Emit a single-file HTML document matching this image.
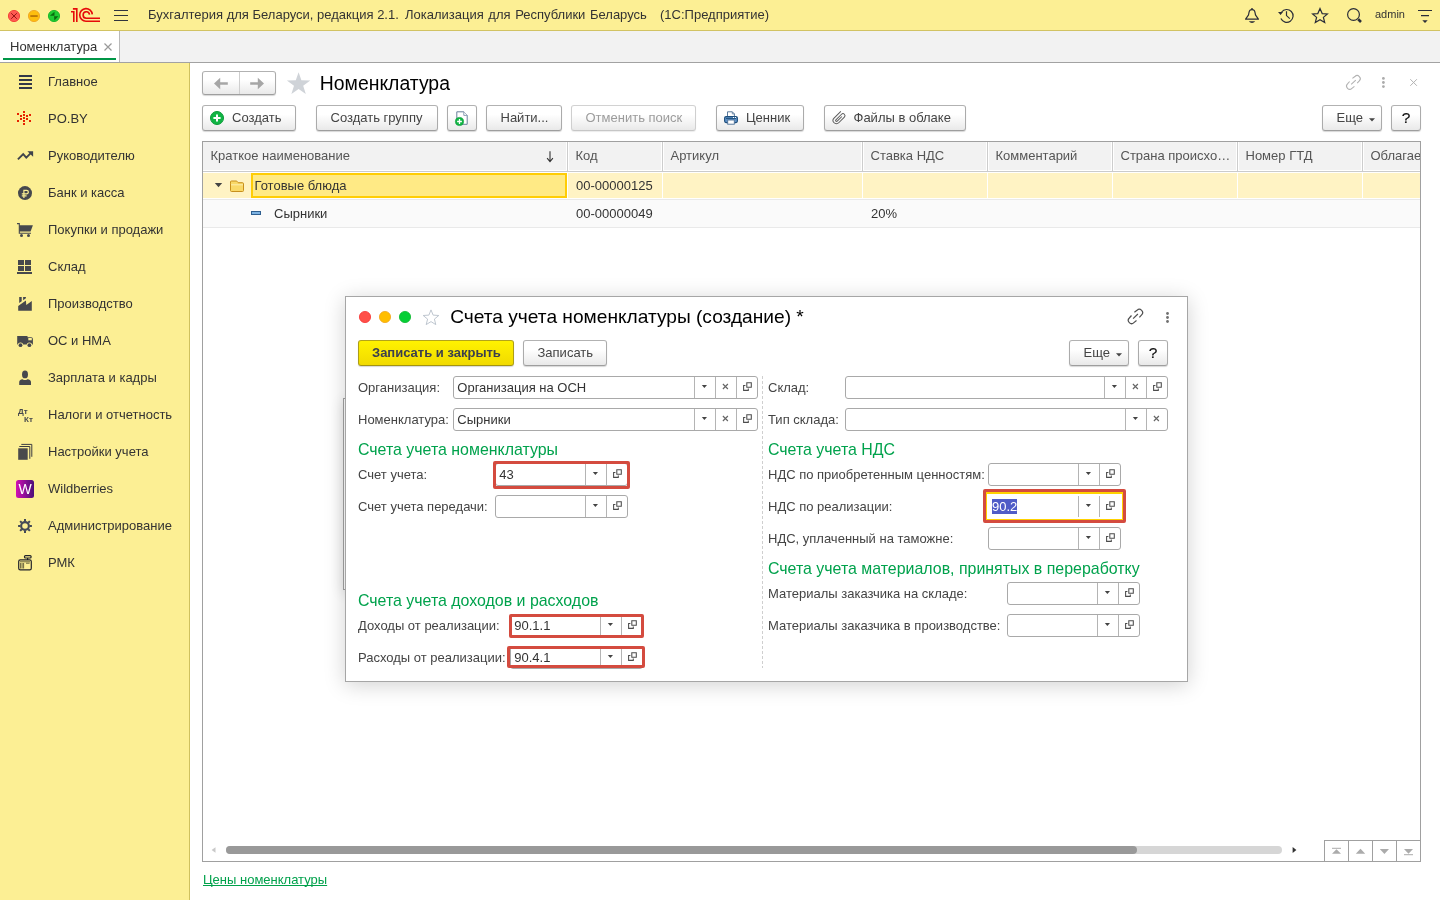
<!DOCTYPE html>
<html lang="ru">
<head>
<meta charset="utf-8">
<title>Номенклатура</title>
<style>
*{box-sizing:border-box;margin:0;padding:0}
html,body{width:1440px;height:900px;overflow:hidden;background:#fff}
body{font-family:"Liberation Sans",sans-serif;font-size:13px;color:#333;position:relative}
#root{position:absolute;left:0;top:0;width:1440px;height:900px;will-change:transform}
.abs{position:absolute}
svg{display:block;position:absolute;overflow:visible}
/* top bar */
#top{position:absolute;left:0;top:0;width:1440px;height:31px;background:#fcef94;border-bottom:1px solid #d2c363}
#top .t{position:absolute;top:7px;line-height:15px;white-space:pre;color:#333;font-size:13px}
.dot{position:absolute;width:12px;height:12px;border-radius:50%;top:10px}
/* tabs */
#tabs{position:absolute;left:0;top:31px;width:1440px;height:32px;background:#f2f2f2;border-bottom:1px solid #a2a2a2}
#tab1{position:absolute;left:0;top:0;width:120px;height:31px;background:#fff;border-right:1px solid #b9b9b9}
#tab1 .lbl{position:absolute;left:10px;top:8px;line-height:15px;color:#333}
#tab1 .ul{position:absolute;left:3px;top:27px;width:113px;height:2px;background:#009646}
/* sidebar */
#side{position:absolute;left:0;top:63px;width:190px;height:837px;background:#fcef94;border-right:1px solid #cfc15f}
.si{position:absolute;left:48px;line-height:15px;color:#333;white-space:nowrap}
/* main */
.btn{position:absolute;height:26px;border:1px solid #adadad;border-color:#b2b2b2 #ababab #9e9e9e;border-radius:3px;background:linear-gradient(#ffffff 0%,#ffffff 35%,#e9e9e9 100%);box-shadow:0 1px 1px rgba(0,0,0,.16);color:#444;line-height:23px;white-space:nowrap}
.btn .l{position:absolute;top:0;line-height:23px}

/* main area (page coords) */
#main{position:absolute;left:0;top:0;width:1440px;height:900px;pointer-events:none}
.btn.dis{border-color:#d2d2d2 #cfcfcf #c6c6c6;color:#9c9c9c;box-shadow:0 1px 1px rgba(0,0,0,.08)}
.h1{position:absolute;font-size:19.4px;line-height:24px;color:#000;white-space:nowrap}
/* table */
#tbl{position:absolute;left:202px;top:141px;width:1219px;height:721px;border:1px solid #a0a0a0;background:#fff;overflow:hidden}
#thead{position:absolute;left:0;top:0;width:1217px;height:28px;background:#f2f2f2}
.th{position:absolute;top:7px;line-height:15px;color:#555;white-space:nowrap}
.vsep{position:absolute;top:0;width:3px;height:29px;background:#fff}
.vsep i{position:absolute;left:1px;top:0;width:1px;height:100%;background:#cdcdcd}
.td{position:absolute;line-height:15px;color:#333;white-space:nowrap}
.wsep{position:absolute;width:1px;background:#fff}
.lnk{position:absolute;color:#00a14b;text-decoration:underline;text-decoration-skip-ink:none;line-height:15px;white-space:nowrap}

/* dialog */
#back{position:absolute;left:343px;top:398px;width:40px;height:192px;background:#fff;border:1px solid #a2a2a2;box-shadow:0 3px 14px rgba(0,0,0,.12)}
#dlg{position:absolute;left:345px;top:296px;width:843px;height:386px;background:#fff;border:1px solid #a6a6a6;box-shadow:0 3px 20px rgba(0,0,0,.18)}
#dlgc{position:absolute;left:-346px;top:-297px;width:1440px;height:900px}
.lb{position:absolute;line-height:15px;color:#444;white-space:nowrap}
.sec{position:absolute;font-size:15.93px;line-height:18px;color:#00a24c;white-space:nowrap}
.inp{position:absolute;height:23px;border:1px solid #a9a9a9;border-radius:3px;background:#fff}
.inp .v{position:absolute;left:3.3px;top:0;line-height:21px;color:#333;white-space:nowrap}
.inp i{position:absolute;top:0;width:1px;height:21px;background:#b4b4b4}
.inp svg{top:0}
.red{position:absolute;border:3px solid #d44b3f;border-radius:2px}
.ybtn{background:linear-gradient(#fff200,#f1da00);border-color:#b3a41a #ad9e16 #a39410;color:#3b3f4e;font-weight:bold}
</style>
</head>
<body>
<div id="root">
<!-- TOP BAR -->
<div id="top">

  <svg width="1440" height="31" style="left:0;top:0" viewBox="0 0 1440 31">
    <!-- window dots -->
    <circle cx="14" cy="16" r="5.6" fill="#ff5a52" stroke="#f23a32" stroke-width="0.9"/>
    <path d="M11.2 13.2L16.8 18.8M16.8 13.2L11.2 18.8" stroke="#8c0d0d" stroke-width="0.9" fill="none"/>
    <circle cx="34" cy="16" r="5.6" fill="#fdbe0e" stroke="#f0a422" stroke-width="0.9"/>
    <rect x="30.3" y="15.2" width="7.4" height="1.7" fill="#b67306"/>
    <circle cx="54" cy="16" r="5.6" fill="#20cb32" stroke="#14b426" stroke-width="0.9"/>
    <path d="M49.8 15.8L54.5 11.7L54.5 15.8ZM54 16.3L58.3 16.3L54.4 20.4Z" fill="#0a6a0f"/>
    <!-- 1C logo -->
    <g fill="none" stroke="#e60a0a" stroke-width="1.6">
      <path d="M71 11.8L73.8 11.8L73.8 22"/>
      <path d="M72.9 8.9L76.8 8.9L76.8 22"/>
      <path d="M92.3 14.4A6.3 6.3 0 1 0 86 21.2L100 21.2"/>
      <path d="M89.5 14.6A3.2 3.2 0 1 0 86.3 18.2L100 18.2"/>
    </g>
    <!-- hamburger -->
    <path d="M114 10.5H128M114 15.5H128M114 20.5H128" stroke="#30343e" stroke-width="1.2"/>
    <!-- bell -->
    <g fill="none" stroke="#2b2e38" stroke-width="1.2" stroke-linejoin="round">
      <path d="M1245.6 19.2H1258.4L1255.6 15.2C1255 13.5 1255.2 11.6 1254.2 10.4C1253.2 9.3 1250.8 9.3 1249.8 10.4C1248.8 11.6 1249 13.5 1248.4 15.2Z"/>
    </g>
    <circle cx="1252" cy="8.8" r="0.9" fill="#2b2e38"/>
    <path d="M1248.9 21.2H1255.1C1254.3 22.4 1253.2 22.9 1252 22.9C1250.8 22.9 1249.7 22.4 1248.9 21.2Z" fill="#2b2e38"/>
    <!-- history -->
    <g fill="none" stroke="#2b2e38" stroke-width="1.2">
      <path d="M1281.6 12A6.4 6.4 0 1 1 1280.9 18.6"/>
      <path d="M1286.5 11.2V15.6L1289.8 18.6"/>
    </g>
    <path d="M1278 12.1H1283L1280.6 15Z" fill="#2b2e38"/>
    <!-- star -->
    <path d="M1320 8.6L1322.2 13.6L1327.4 14L1323.4 17.4L1324.7 22.4L1320 19.7L1315.3 22.4L1316.6 17.4L1312.6 14L1317.8 13.6Z" fill="none" stroke="#2b2e38" stroke-width="1.2" stroke-linejoin="miter"/>
    <!-- search -->
    <circle cx="1353.5" cy="14.5" r="5.9" fill="none" stroke="#2b2e38" stroke-width="1.2"/>
    <path d="M1358.2 19.3L1361 22" stroke="#2b2e38" stroke-width="2.6"/>
    <!-- filter -->
    <path d="M1418 10.5H1432M1421 15.6H1429" stroke="#2b2e38" stroke-width="1.2"/>
    <path d="M1422.3 20.2H1427.7L1425 22.9Z" fill="#2b2e38"/>
  </svg>
  <span class="t" style="left:148px">Бухгалтерия для Беларуси, редакция 2.1.</span>
  <span class="t" style="left:405px;word-spacing:1px">Локализация для Республики Беларусь</span>
  <span class="t" style="left:660px">(1С:Предприятие)</span>
  <span class="t" style="left:1375px;font-size:11px;top:7px">admin</span>
</div>
<!-- TABS -->
<div id="tabs">
  <div id="tab1"><span class="lbl">Номенклатура</span><svg width="8" height="8" style="left:104px;top:12px" viewBox="0 0 8 8"><path d="M0.5 0.5L7.5 7.5M7.5 0.5L0.5 7.5" stroke="#9a9a9a" stroke-width="1.2"/></svg><div class="ul"></div></div>
</div>
<!-- SIDEBAR -->
<div id="side">

  <svg width="60" height="837" style="left:0;top:0" viewBox="0 63 60 837">
    <g fill="#333848">
      <rect x="19" y="75" width="13" height="2"/><rect x="19" y="79" width="13" height="2"/><rect x="19" y="83" width="13" height="2"/><rect x="19" y="87" width="13" height="2"/>
    </g>
    <g fill="#e62200"><rect x="23" y="111" width="2" height="2"/><rect x="23" y="114" width="2" height="2"/><rect x="23" y="117" width="2" height="2"/><rect x="23" y="120" width="2" height="2"/><rect x="23" y="123" width="2" height="2"/><rect x="17" y="113" width="2" height="2"/><rect x="20" y="115" width="2" height="2"/><rect x="26" y="115" width="2" height="2"/><rect x="29" y="114" width="2" height="2"/><rect x="20" y="118" width="2" height="2"/><rect x="26" y="118" width="2" height="2"/><rect x="17" y="120" width="2" height="2"/><rect x="29" y="120" width="2" height="2"/></g>
    <!-- trend -->
    <path d="M17.9 159.4L23.2 154.1L26.3 157.6L31 152.9" fill="none" stroke="#3f434b" stroke-width="1.9"/>
    <path d="M27.4 151.2H33.1V156.8Z" fill="#3f434b"/>
    <!-- ruble -->
    <circle cx="25" cy="193.1" r="7" fill="#46484d"/>
    <path d="M23.9 198V190.3H26.6A1.75 1.75 0 0 1 26.6 193.8H21.8M21.8 195.8H26.6" fill="none" stroke="#fcef94" stroke-width="1.2"/>
    <!-- cart -->
    <g fill="#46484d">
      <path d="M19.2 225.2H32.9L30.6 231.6H19.2Z"/>
      <circle cx="21.5" cy="235.6" r="1.5"/><circle cx="28.5" cy="235.6" r="1.5"/>
    </g>
    <path d="M17 223.6H19.3V233.3H31" fill="none" stroke="#46484d" stroke-width="1.1"/>
    <!-- sklad -->
    <g fill="#46484d">
      <rect x="18" y="260" width="6" height="5"/><rect x="25" y="260" width="6" height="5"/>
      <rect x="18" y="266" width="6" height="5"/><rect x="25" y="266" width="6" height="5"/>
      <rect x="17" y="272" width="15" height="2"/>
    </g>
    <!-- factory -->
    <g fill="#46484d">
      <path d="M18.2 310.7V306L25.9 300.6L26.3 304.9L31.8 301V310.7Z"/>
      <path d="M19.2 297.1H21.7V301.3L19.2 303.1Z"/>
      <path d="M23.1 297.1H25.9V298.3L23.1 300.3Z"/>
    </g>
    <!-- truck -->
    <g fill="#46484d">
      <path d="M17.2 336.1H27.5V337.2H31.2Q32.9 337.2 32.9 339V344.4H17.2Z"/>
    </g>
    <rect x="28.3" y="338" width="3.5" height="2.3" fill="#fcef94"/>
    <circle cx="20.5" cy="345.2" r="2.7" fill="#fcef94"/><circle cx="29.4" cy="345.2" r="2.7" fill="#fcef94"/>
    <circle cx="20.5" cy="345.2" r="1.9" fill="#46484d"/><circle cx="29.4" cy="345.2" r="1.9" fill="#46484d"/>
    <!-- person -->
    <g fill="#46484d">
      <ellipse cx="25" cy="374.4" rx="3" ry="3.9"/>
      <path d="M19.2 384.9V382.2Q19.2 379.6 22.6 379.2Q25 381 27.4 379.2Q31 379.6 31 382.2V384.9Z"/>
    </g>
    <!-- pages -->
    <rect x="18.2" y="448.3" width="9.5" height="11.5" fill="#4a4a4c"/>
    <path d="M19.3 446.5H29.8V458.8M21.3 444.4H31.8V456.8" fill="none" stroke="#3c3d42" stroke-width="1"/>
    <!-- gear -->
    <g stroke="#444a56" fill="none"><circle cx="25" cy="526" r="3.85" stroke-width="2.1"/><path d="M29.60 526.00L31.90 526.00M28.25 529.25L29.88 530.88M25.00 530.60L25.00 532.90M21.75 529.25L20.12 530.88M20.40 526.00L18.10 526.00M21.75 522.75L20.12 521.12M25.00 521.40L25.00 519.10M28.25 522.75L29.88 521.12" stroke-width="2"/></g>
    <!-- rmk -->
    <g fill="none" stroke="#22242a" stroke-width="1.2">
      <rect x="18.7" y="559.9" width="12.6" height="10" rx="1.6"/>
      <rect x="24.5" y="555.6" width="6.6" height="2.4" rx="1"/>
      <path d="M27.6 558V560"/>
    </g>
    <g stroke="#5a5636" stroke-width="0.9" fill="none">
      <path d="M20 561.8H30M20.6 563V568.5M22.1 563V568.5M23.6 563V568.5M26 563.2H29.6"/>
    </g>
  </svg>
  <span class="abs" style="left:18px;top:343.5px;font-size:8px;font-weight:bold;line-height:10px;color:#46484d">Дт</span>
  <span class="abs" style="left:24px;top:351.5px;font-size:8px;font-weight:bold;line-height:10px;color:#46484d">Кт</span>
  <div class="abs" style="left:16px;top:417px;width:18px;height:18px;border-radius:2.5px;background:linear-gradient(90deg,#d20fb4,#4a1078);color:#fff;font-size:14px;line-height:18px;text-align:center">W</div>
  <span class="si" style="top:11px">Главное</span>
  <span class="si" style="top:48px">PO.BY</span>
  <span class="si" style="top:85px">Руководителю</span>
  <span class="si" style="top:122px">Банк и касса</span>
  <span class="si" style="top:159px">Покупки и продажи</span>
  <span class="si" style="top:196px">Склад</span>
  <span class="si" style="top:233px">Производство</span>
  <span class="si" style="top:270px">ОС и НМА</span>
  <span class="si" style="top:307px">Зарплата и кадры</span>
  <span class="si" style="top:344px">Налоги и отчетность</span>
  <span class="si" style="top:381px">Настройки учета</span>
  <span class="si" style="top:418px">Wildberries</span>
  <span class="si" style="top:455px">Администрирование</span>
  <span class="si" style="top:492px">РМК</span>
</div>
<!-- MAIN -->
<div id="main">
  <!-- nav buttons -->
  <div class="btn" style="left:202px;top:71px;width:74px;height:24px">
    <div class="abs" style="left:36px;top:0;width:1px;height:22px;background:#cecece"></div>
    <svg width="72" height="22" style="left:0;top:0" viewBox="203 72 72 22">
      <path d="M214 83.5L220.2 77.8V82.2H227.8V84.8H220.2V89.2Z" fill="#a6a6a6"/>
      <path d="M264 83.5L257.8 77.8V82.2H250.2V84.8H257.8V89.2Z" fill="#a6a6a6"/>
    </svg>
  </div>
  <svg width="24" height="22" style="left:287px;top:72px" viewBox="287 72 24 22"><path d="M298.6 72.2L301.4 80.3L310.3 80.5L303.2 85.7L305.8 94L298.6 89L291.4 94L294 85.7L286.9 80.5L295.8 80.3Z" fill="#cfd3d8"/></svg>
  <span class="h1" style="left:319.8px;top:71px">Номенклатура</span>
  <!-- header right icons -->
  <svg width="80" height="20" style="left:1344px;top:73px" viewBox="1344 73 80 20">
    <g fill="none" stroke="#b2b2b2" stroke-width="1.1" transform="translate(1345.3,74.3) scale(0.96)"><path d="M7.4 4.3L10 2.3A3.25 3.25 0 0 1 14.6 6.9L12.4 9.3M4.5 7.5L2.3 10A3.25 3.25 0 0 0 6.9 14.6L9.5 12.5M6.1 10.6L10.9 6"/></g><path d="M1410.3 79.2L1416.9 85.8M1416.9 79.2L1410.3 85.8" stroke="#b2b2b2" stroke-width="1" fill="none"/>
    <g fill="#ababab"><circle cx="1383.4" cy="78.4" r="1.4"/><circle cx="1383.4" cy="82.5" r="1.4"/><circle cx="1383.4" cy="86.6" r="1.4"/></g>
  </svg>
  <!-- toolbar -->
  <div class="btn" style="left:202px;top:105px;width:94px">
    <svg width="14" height="14" style="left:7px;top:5px" viewBox="0 0 14 14"><circle cx="7" cy="7" r="6.5" fill="#11b545" stroke="#0a9a36" stroke-width="1"/><path d="M7 3.4V10.6M3.4 7H10.6" stroke="#fff" stroke-width="2"/></svg>
    <span class="l" style="left:29px">Создать</span>
  </div>
  <div class="btn" style="left:316px;top:105px;width:122px"><span class="l" style="left:13.5px">Создать группу</span></div>
  <div class="btn" style="left:447px;top:105px;width:30px">
    <svg width="30" height="25" style="left:-1px;top:-1px" viewBox="447 105 30 25">
      <path d="M456.8 111.8H463.8L467.2 115.4V124.3H456.8Z" fill="#fff" stroke="#6a809c" stroke-width="1"/>
      <path d="M463.8 111.8V115.4H467.2" fill="#fff" stroke="#7f93ad" stroke-width="0.9"/>
      <circle cx="459.5" cy="121.5" r="4.1" fill="#10b444" stroke="#0a9c38" stroke-width="0.6"/>
      <path d="M459.5 119.1V123.9M457.1 121.5H461.9" stroke="#fff" stroke-width="1.3"/>
    </svg>
  </div>
  <div class="btn" style="left:486px;top:105px;width:76px"><span class="l" style="left:13.5px">Найти...</span></div>
  <div class="btn dis" style="left:571px;top:105px;width:125px"><span class="l" style="left:13.5px">Отменить поиск</span></div>
  <div class="btn" style="left:716px;top:105px;width:88px">
    <svg width="16" height="16" style="left:7px;top:5px" viewBox="724 111 16 16"><path d="M727.5 116.4V111.8H732.3L734.4 113.9V116.4" fill="#fff" stroke="#5a7a9c" stroke-width="1"/><path d="M732.3 111.8V113.9H734.4" fill="none" stroke="#5a7a9c" stroke-width="0.8"/><rect x="724.6" y="116.6" width="12.8" height="6" rx="1.5" fill="#5d90c6" stroke="#1f4f7c" stroke-width="1.1"/><path d="M726 118.5H736" stroke="#1f4f7c" stroke-width="0.9"/><rect x="727.7" y="120" width="6.6" height="4.2" fill="#fff" stroke="#4c6f96" stroke-width="0.9"/><rect x="733" y="117" width="1" height="1" fill="#fff"/><rect x="735" y="117" width="1" height="1" fill="#fff"/></svg>
    <span class="l" style="left:29px">Ценник</span>
  </div>
  <div class="btn" style="left:824px;top:105px;width:142px">
    <svg width="16" height="16" style="left:7px;top:5px" viewBox="832 111 16 16"><path transform="translate(839,117.5) rotate(-45)" d="M5.7 -3.1L-3.9 -3.1A3.3 3.3 0 0 0 -3.9 3.5L4.1 3.5A2 2 0 0 0 4.1 -0.5L-3.9 -0.5A0.92 0.92 0 0 0 -3.9 1.34L2.76 1.34" fill="none" stroke="#5c5c5c" stroke-width="1"/></svg>
    <span class="l" style="left:28.5px">Файлы в облаке</span>
  </div>
  <div class="btn" style="left:1322px;top:105px;width:60px"><span class="l" style="left:13.5px">Еще</span>
    <svg width="6" height="4" style="left:46px;top:11.5px" viewBox="0 0 6 4"><path d="M0 0.2H6L3 3.4Z" fill="#444"/></svg>
  </div>
  <div class="btn" style="left:1391px;top:105px;width:30px"><span class="l" style="left:0;top:0.3px;width:28px;text-align:center;font-size:15.5px;color:#111;-webkit-text-stroke:0.2px #111">?</span></div>

  <!-- table -->
  <div id="tbl">
    <div id="thead"></div>
    <div class="abs" style="left:0;top:29px;width:1217px;height:1px;background:#cbcbcb"></div>
    <!-- row1 -->
    <div class="abs" style="left:0;top:31px;width:1217px;height:25px;background:#fff3c4"></div>
    <div class="abs" style="left:48px;top:31px;width:316px;height:25px;background:#ffea85;border:2px solid #ffcd05"></div>
    <div class="abs" style="left:0;top:57px;width:1217px;height:1px;background:#e9e9e9"></div>
    <!-- row2 -->
    <div class="abs" style="left:0;top:58px;width:1217px;height:27px;background:#fafafa"></div>
    <div class="abs" style="left:0;top:85px;width:1217px;height:1px;background:#e9e9e9"></div>
    <div class="vsep" style="left:363px"><i></i></div>
    <div class="wsep" style="left:364px;top:31px;height:25px"></div>
    <div class="vsep" style="left:458px"><i></i></div>
    <div class="wsep" style="left:459px;top:31px;height:25px"></div>
    <div class="vsep" style="left:658px"><i></i></div>
    <div class="wsep" style="left:659px;top:31px;height:25px"></div>
    <div class="vsep" style="left:783px"><i></i></div>
    <div class="wsep" style="left:784px;top:31px;height:25px"></div>
    <div class="vsep" style="left:908px"><i></i></div>
    <div class="wsep" style="left:909px;top:31px;height:25px"></div>
    <div class="vsep" style="left:1033px"><i></i></div>
    <div class="wsep" style="left:1034px;top:31px;height:25px"></div>
    <div class="vsep" style="left:1158px"><i></i></div>
    <div class="wsep" style="left:1159px;top:31px;height:25px"></div>
    <span class="th" style="left:7.5px;top:6px">Краткое наименование</span>
    <span class="th" style="left:372.5px;top:6px">Код</span>
    <span class="th" style="left:467.5px;top:6px">Артикул</span>
    <span class="th" style="left:667.5px;top:6px">Ставка НДС</span>
    <span class="th" style="left:792.5px;top:6px">Комментарий</span>
    <span class="th" style="left:917.5px;top:6px">Страна происхо…</span>
    <span class="th" style="left:1042.5px;top:6px">Номер ГТД</span>
    <span class="th" style="left:1167.5px;top:6px">Облагаемая</span>
    <svg width="8" height="12" style="left:342.5px;top:8.5px" viewBox="0 0 8 12"><path d="M4 0.3V10.4M1.1 7.2L4 10.6L6.9 7.2" fill="none" stroke="#333" stroke-width="1.1"/></svg>
    <span class="td" style="left:51.5px;top:36px">Готовые блюда</span>
    <span class="td" style="left:373px;top:36px">00-00000125</span>
    <span class="td" style="left:71px;top:64px">Сырники</span>
    <span class="td" style="left:373px;top:64px">00-00000049</span>
    <span class="td" style="left:668px;top:64px">20%</span>
    <svg width="40" height="40" style="left:0;top:31px" viewBox="203 173 40 40"><path d="M214.8 183H222.2L218.5 187.2Z" fill="#444"/><path d="M230.5 183.2V182Q230.5 181 231.5 181H236.2Q237 181 237.5 181.8L238.2 182.7H242.5Q243.5 182.7 243.5 183.7V190.5Q243.5 191.5 242.5 191.5H231.5Q230.5 191.5 230.5 190.5Z" fill="#f9d968" stroke="#c8901c" stroke-width="1"/><path d="M231 184.8H243" stroke="#fdeeb0" stroke-width="1"/></svg>
    <div class="abs" style="left:48px;top:69px;width:10px;height:4px;background:#7db3e3;border:1px solid #2f5f90"></div>
    <div class="abs" style="left:23px;top:704px;width:1056px;height:8px;border-radius:4px;background:#d6d6d6"></div>
    <div class="abs" style="left:23px;top:704px;width:911px;height:8px;border-radius:4px;background:#999"></div>
    <svg width="6" height="8" style="left:7.8px;top:704px" viewBox="0 0 6 8"><path d="M4.5 1.2V6.8L0.6 4Z" fill="#c9c9c9"/></svg>
    <svg width="6" height="8" style="left:1088.5px;top:704px" viewBox="0 0 6 8"><path d="M0.6 1V7L4.4 4Z" fill="#333"/></svg>
    <div class="abs" style="left:1121px;top:698px;width:97px;height:22px;background:#fff;border-left:1px solid #a0a0a0;border-top:1px solid #a0a0a0"></div>
    <div class="abs" style="left:1145px;top:699px;width:1px;height:21px;background:#a0a0a0"></div>
    <div class="abs" style="left:1169px;top:699px;width:1px;height:21px;background:#a0a0a0"></div>
    <div class="abs" style="left:1193px;top:699px;width:1px;height:21px;background:#a0a0a0"></div>
    <svg width="96" height="21" style="left:1122px;top:699px" viewBox="1325 841 96 21"><g fill="#ababab"><rect x="1332" y="847.8" width="9" height="1"/><path d="M1336.5 849.2L1341 853.8H1332Z"/><path d="M1360.5 848.8L1365.2 853.8H1355.8Z"/><path d="M1379.8 849.1H1389L1384.4 854Z"/><path d="M1404 849.1H1413L1408.5 853.7Z"/><rect x="1404" y="854.2" width="9" height="1"/></g></svg>
  </div>
  <span class="lnk" style="left:203px;top:872px">Цены номенклатуры</span>
</div>

<div id="back"></div>
<div id="dlg"><div id="dlgc">

<svg width="100" height="20" style="left:355px;top:307px" viewBox="355 307 100 20"><circle cx="365" cy="317" r="5.6" fill="#ff4f49" stroke="#f63232" stroke-width="0.8"/><circle cx="385" cy="317" r="5.6" fill="#ffbe00" stroke="#f1a51c" stroke-width="0.8"/><circle cx="405" cy="317" r="5.6" fill="#06cf36" stroke="#0bb82f" stroke-width="0.8"/><path d="M431 309.9L433.1 315.1L438.8 315.5L434.4 319.1L435.8 324.6L431 321.6L426.2 324.6L427.6 319.1L423.2 315.5L428.9 315.1Z" fill="none" stroke="#b7c0ca" stroke-width="0.9"/></svg>
<span class="h1" style="left:450.2px;top:305px;font-size:19.15px">Счета учета номенклатуры (создание) *</span>
<svg width="50" height="20" style="left:1125px;top:306px" viewBox="1125 306 50 20"><g fill="none" stroke="#505050" stroke-width="1.2" transform="translate(1127,308)"><path d="M7.4 4.3L10 2.3A3.25 3.25 0 0 1 14.6 6.9L12.4 9.3M4.5 7.5L2.3 10A3.25 3.25 0 0 0 6.9 14.6L9.5 12.5M6.1 10.6L10.9 6"/></g><g fill="#707070"><circle cx="1167.5" cy="313.5" r="1.4"/><circle cx="1167.5" cy="317.5" r="1.4"/><circle cx="1167.5" cy="321.5" r="1.4"/></g></svg>
<div class="btn ybtn" style="left:358px;top:340px;width:156px"><span class="l" style="left:13px">Записать и закрыть</span></div>
<div class="btn" style="left:523px;top:340px;width:84px"><span class="l" style="left:13.5px">Записать</span></div>
<div class="btn" style="left:1069px;top:340px;width:60px"><span class="l" style="left:13.5px">Еще</span><svg width="6" height="4" style="left:46px;top:11.5px" viewBox="0 0 6 4"><path d="M0 0.2H6L3 3.4Z" fill="#444"/></svg></div>
<div class="btn" style="left:1138px;top:340px;width:30px"><span class="l" style="left:0;top:0.3px;width:28px;text-align:center;font-size:15.5px;color:#111;-webkit-text-stroke:0.2px #111">?</span></div>
<div class="abs" style="left:762px;top:376px;width:1px;height:292px;background:repeating-linear-gradient(#cfcfcf 0 3px,transparent 3px 5px)"></div>
<span class="lb" style="left:358px;top:380px">Организация:</span>
<div class="inp" style="left:453px;top:376px;width:305px"><span class="v">Организация на ОСН</span><i style="left:240px"></i><svg width="20" height="21" style="left:241px" viewBox="0.5 0 20 21"><path d="M7.3 8.1H12.5L9.9 11.1Z" fill="#444"/></svg><i style="left:261px"></i><svg width="20" height="21" style="left:262px" viewBox="0.5 0 20 21"><path d="M7.4 7L12.4 12M12.4 7L7.4 12" stroke="#666" stroke-width="1.15" fill="none"/></svg><i style="left:282px"></i><svg width="20" height="21" style="left:283px" viewBox="0.5 0 20 21"><g fill="none" stroke="#4c4c4c" stroke-width="1.05"><path d="M10.3 5.65H14.8V10.15H10.3Z"/><path d="M8.9 8.55H7.1V13.35H11.8V11.55"/></g></svg></div>
<span class="lb" style="left:358px;top:412px">Номенклатура:</span>
<div class="inp" style="left:453px;top:408px;width:305px"><span class="v">Сырники</span><i style="left:240px"></i><svg width="20" height="21" style="left:241px" viewBox="0.5 0 20 21"><path d="M7.3 8.1H12.5L9.9 11.1Z" fill="#444"/></svg><i style="left:261px"></i><svg width="20" height="21" style="left:262px" viewBox="0.5 0 20 21"><path d="M7.4 7L12.4 12M12.4 7L7.4 12" stroke="#666" stroke-width="1.15" fill="none"/></svg><i style="left:282px"></i><svg width="20" height="21" style="left:283px" viewBox="0.5 0 20 21"><g fill="none" stroke="#4c4c4c" stroke-width="1.05"><path d="M10.3 5.65H14.8V10.15H10.3Z"/><path d="M8.9 8.55H7.1V13.35H11.8V11.55"/></g></svg></div>
<span class="sec" style="left:358px;top:441px">Счета учета номенклатуры</span>
<span class="lb" style="left:358px;top:467px">Счет учета:</span>
<div class="inp" style="left:495px;top:463px;width:133px"><span class="v">43</span><i style="left:89px"></i><svg width="20" height="21" style="left:90px" viewBox="0.5 0 20 21"><path d="M7.3 8.1H12.5L9.9 11.1Z" fill="#444"/></svg><i style="left:110px"></i><svg width="20" height="21" style="left:111px" viewBox="0.5 0 20 21"><g fill="none" stroke="#4c4c4c" stroke-width="1.05"><path d="M10.3 5.65H14.8V10.15H10.3Z"/><path d="M8.9 8.55H7.1V13.35H11.8V11.55"/></g></svg></div>
<div class="red" style="left:493px;top:461px;width:137px;height:28px"></div>
<span class="lb" style="left:358px;top:499px">Счет учета передачи:</span>
<div class="inp" style="left:495px;top:495px;width:133px"><i style="left:89px"></i><svg width="20" height="21" style="left:90px" viewBox="0.5 0 20 21"><path d="M7.3 8.1H12.5L9.9 11.1Z" fill="#444"/></svg><i style="left:110px"></i><svg width="20" height="21" style="left:111px" viewBox="0.5 0 20 21"><g fill="none" stroke="#4c4c4c" stroke-width="1.05"><path d="M10.3 5.65H14.8V10.15H10.3Z"/><path d="M8.9 8.55H7.1V13.35H11.8V11.55"/></g></svg></div>
<span class="sec" style="left:358px;top:592px">Счета учета доходов и расходов</span>
<span class="lb" style="left:358px;top:618px">Доходы от реализации:</span>
<div class="inp" style="left:510px;top:614px;width:133px"><span class="v">90.1.1</span><i style="left:89px"></i><svg width="20" height="21" style="left:90px" viewBox="0.5 0 20 21"><path d="M7.3 8.1H12.5L9.9 11.1Z" fill="#444"/></svg><i style="left:110px"></i><svg width="20" height="21" style="left:111px" viewBox="0.5 0 20 21"><g fill="none" stroke="#4c4c4c" stroke-width="1.05"><path d="M10.3 5.65H14.8V10.15H10.3Z"/><path d="M8.9 8.55H7.1V13.35H11.8V11.55"/></g></svg></div>
<div class="red" style="left:509px;top:614px;width:135px;height:24px"></div>
<span class="lb" style="left:358px;top:650px">Расходы от реализации:</span>
<div class="inp" style="left:510px;top:646px;width:133px"><span class="v">90.4.1</span><i style="left:89px"></i><svg width="20" height="21" style="left:90px" viewBox="0.5 0 20 21"><path d="M7.3 8.1H12.5L9.9 11.1Z" fill="#444"/></svg><i style="left:110px"></i><svg width="20" height="21" style="left:111px" viewBox="0.5 0 20 21"><g fill="none" stroke="#4c4c4c" stroke-width="1.05"><path d="M10.3 5.65H14.8V10.15H10.3Z"/><path d="M8.9 8.55H7.1V13.35H11.8V11.55"/></g></svg></div>
<div class="red" style="left:507px;top:646px;width:138px;height:22px"></div>
<span class="lb" style="left:768px;top:380px">Склад:</span>
<div class="inp" style="left:845px;top:376px;width:323px"><i style="left:258px"></i><svg width="20" height="21" style="left:259px" viewBox="0.5 0 20 21"><path d="M7.3 8.1H12.5L9.9 11.1Z" fill="#444"/></svg><i style="left:279px"></i><svg width="20" height="21" style="left:280px" viewBox="0.5 0 20 21"><path d="M7.4 7L12.4 12M12.4 7L7.4 12" stroke="#666" stroke-width="1.15" fill="none"/></svg><i style="left:300px"></i><svg width="20" height="21" style="left:301px" viewBox="0.5 0 20 21"><g fill="none" stroke="#4c4c4c" stroke-width="1.05"><path d="M10.3 5.65H14.8V10.15H10.3Z"/><path d="M8.9 8.55H7.1V13.35H11.8V11.55"/></g></svg></div>
<span class="lb" style="left:768px;top:412px">Тип склада:</span>
<div class="inp" style="left:845px;top:408px;width:323px"><i style="left:279px"></i><svg width="20" height="21" style="left:280px" viewBox="0.5 0 20 21"><path d="M7.3 8.1H12.5L9.9 11.1Z" fill="#444"/></svg><i style="left:300px"></i><svg width="20" height="21" style="left:301px" viewBox="0.5 0 20 21"><path d="M7.4 7L12.4 12M12.4 7L7.4 12" stroke="#666" stroke-width="1.15" fill="none"/></svg></div>
<span class="sec" style="left:768px;top:441px">Счета учета НДС</span>
<span class="lb" style="left:768px;top:467px">НДС по приобретенным ценностям:</span>
<div class="inp" style="left:988px;top:463px;width:133px"><i style="left:89px"></i><svg width="20" height="21" style="left:90px" viewBox="0.5 0 20 21"><path d="M7.3 8.1H12.5L9.9 11.1Z" fill="#444"/></svg><i style="left:110px"></i><svg width="20" height="21" style="left:111px" viewBox="0.5 0 20 21"><g fill="none" stroke="#4c4c4c" stroke-width="1.05"><path d="M10.3 5.65H14.8V10.15H10.3Z"/><path d="M8.9 8.55H7.1V13.35H11.8V11.55"/></g></svg></div>
<span class="lb" style="left:768px;top:499px">НДС по реализации:</span>
<div class="abs" style="left:985px;top:492px;width:139px;height:29px;border:2px solid #ffd200;background:#fff"><span class="abs" style="left:5px;top:5px;height:15px;line-height:15px;background:#4f5cc7;color:#fff;white-space:nowrap">90.2</span><i class="abs" style="left:91px;top:2px;width:1px;height:21px;background:#b4b4b4"></i><svg width="20" height="21" style="left:92px;top:1.7px" viewBox="0.5 0 20 21"><path d="M7.3 8.1H12.5L9.9 11.1Z" fill="#444"/></svg><i class="abs" style="left:112px;top:2px;width:1px;height:21px;background:#b4b4b4"></i><svg width="20" height="21" style="left:113px;top:2px" viewBox="0.5 0 20 21"><g fill="none" stroke="#4c4c4c" stroke-width="1.05"><path d="M10.3 5.65H14.8V10.15H10.3Z"/><path d="M8.9 8.55H7.1V13.35H11.8V11.55"/></g></svg></div>
<div class="red" style="left:983px;top:489px;width:143px;height:34px"></div>
<span class="lb" style="left:768px;top:531px">НДС, уплаченный на таможне:</span>
<div class="inp" style="left:988px;top:527px;width:133px"><i style="left:89px"></i><svg width="20" height="21" style="left:90px" viewBox="0.5 0 20 21"><path d="M7.3 8.1H12.5L9.9 11.1Z" fill="#444"/></svg><i style="left:110px"></i><svg width="20" height="21" style="left:111px" viewBox="0.5 0 20 21"><g fill="none" stroke="#4c4c4c" stroke-width="1.05"><path d="M10.3 5.65H14.8V10.15H10.3Z"/><path d="M8.9 8.55H7.1V13.35H11.8V11.55"/></g></svg></div>
<span class="sec" style="left:768px;top:559.5px">Счета учета материалов, принятых в переработку</span>
<span class="lb" style="left:768px;top:586px">Материалы заказчика на складе:</span>
<div class="inp" style="left:1007px;top:582px;width:133px"><i style="left:89px"></i><svg width="20" height="21" style="left:90px" viewBox="0.5 0 20 21"><path d="M7.3 8.1H12.5L9.9 11.1Z" fill="#444"/></svg><i style="left:110px"></i><svg width="20" height="21" style="left:111px" viewBox="0.5 0 20 21"><g fill="none" stroke="#4c4c4c" stroke-width="1.05"><path d="M10.3 5.65H14.8V10.15H10.3Z"/><path d="M8.9 8.55H7.1V13.35H11.8V11.55"/></g></svg></div>
<span class="lb" style="left:768px;top:618px">Материалы заказчика в производстве:</span>
<div class="inp" style="left:1007px;top:614px;width:133px"><i style="left:89px"></i><svg width="20" height="21" style="left:90px" viewBox="0.5 0 20 21"><path d="M7.3 8.1H12.5L9.9 11.1Z" fill="#444"/></svg><i style="left:110px"></i><svg width="20" height="21" style="left:111px" viewBox="0.5 0 20 21"><g fill="none" stroke="#4c4c4c" stroke-width="1.05"><path d="M10.3 5.65H14.8V10.15H10.3Z"/><path d="M8.9 8.55H7.1V13.35H11.8V11.55"/></g></svg></div>
</div></div>
</div>
</body>
</html>
